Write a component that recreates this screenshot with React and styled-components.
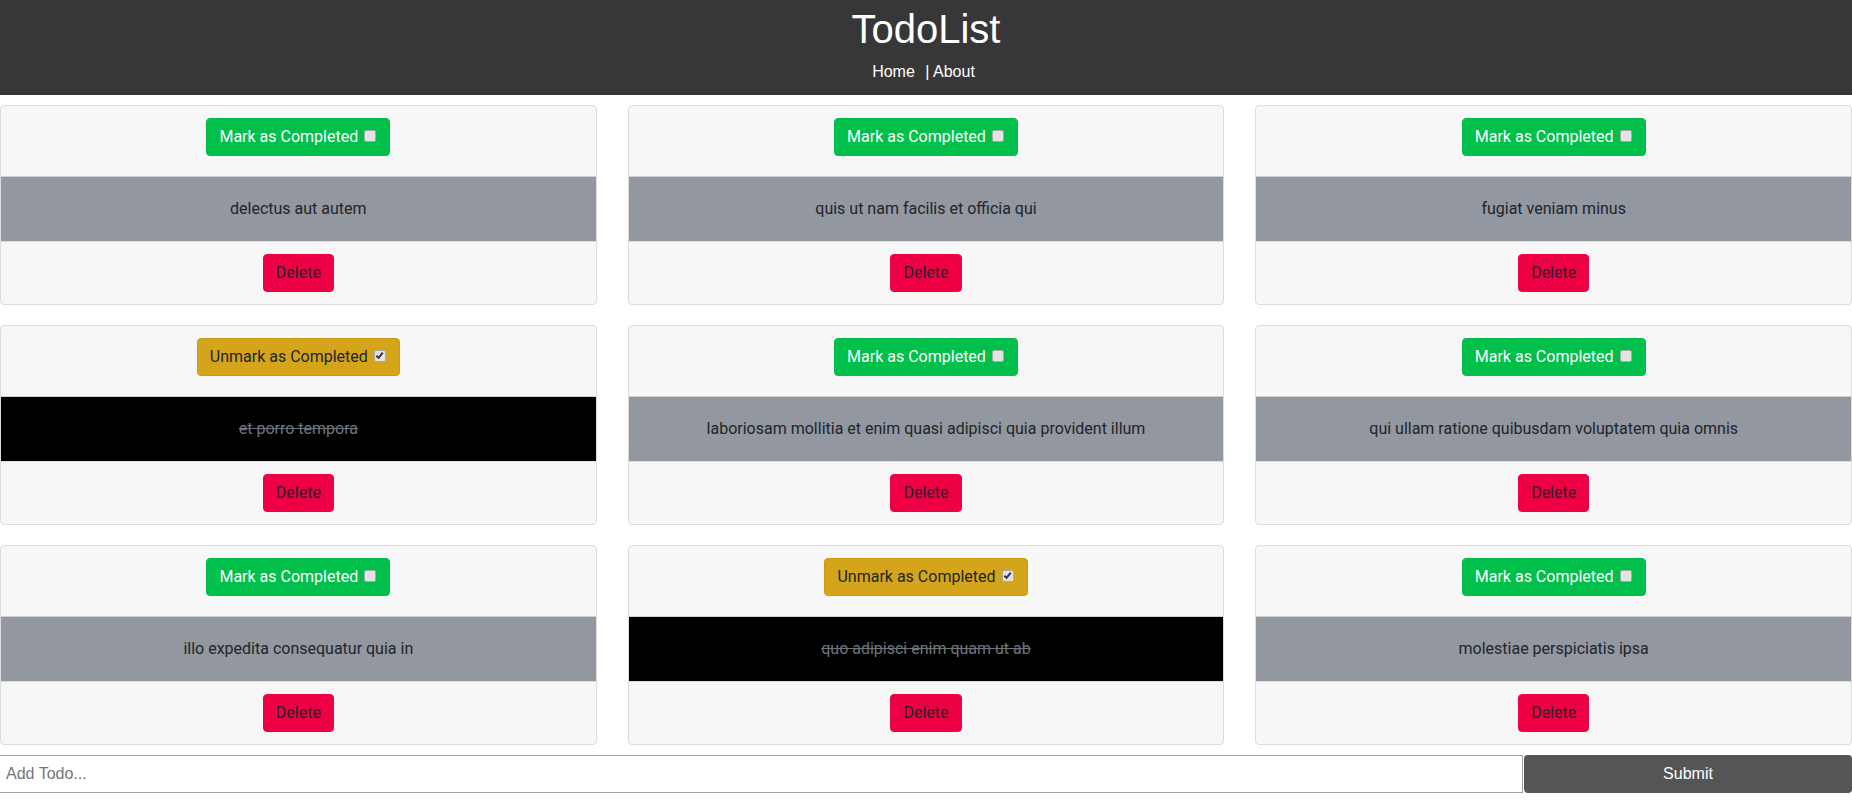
import React from 'react'
import styled, { createGlobalStyle } from 'styled-components'

const GlobalStyle = createGlobalStyle`
  html, body {
    margin: 0;
    padding: 0;
    background: #fff;
  }
  body {
    font-family: Roboto, "Liberation Sans", Arial, sans-serif;
    font-size: 16px;
    line-height: 1.5;
    color: #212529;
  }
  * { box-sizing: border-box; }
`

const todos = [
  { title: 'delectus aut autem', completed: false },
  { title: 'quis ut nam facilis et officia qui', completed: false },
  { title: 'fugiat veniam minus', completed: false },
  { title: 'et porro tempora', completed: true },
  { title: 'laboriosam mollitia et enim quasi adipisci quia provident illum', completed: false },
  { title: 'qui ullam ratione quibusdam voluptatem quia omnis', completed: false },
  { title: 'illo expedita consequatur quia in', completed: false },
  { title: 'quo adipisci enim quam ut ab', completed: true },
  { title: 'molestiae perspiciatis ipsa', completed: false }
]

const Header = styled.header`
  background: #373737;
  color: #fff;
  text-align: center;
  padding: 5px 0 11px;
  font-family: "Liberation Sans", Arial, sans-serif;
`

const Title = styled.h1`
  margin: 0;
  font-size: 40px;
  font-weight: 400;
  line-height: 48px;
`

const Nav = styled.nav`
  margin-top: 7px;
  padding-right: 5px;
  font-size: 16px;
  line-height: 24px;
`

const NavLink = styled.a`
  color: #fff;
  text-decoration: none;
  margin-right: ${props => (props.$spaced ? '6px' : '0')};
`

const Grid = styled.main`
  display: grid;
  grid-template-columns: repeat(3, 1fr);
  column-gap: 31px;
  row-gap: 20px;
  padding-top: 10px;
`

const Card = styled.div`
  background: #f7f7f7;
  border: 1px solid #dcdcdc;
  border-radius: 4px;
  overflow: hidden;
  text-align: center;
`

const Top = styled.div`
  padding: 12px 20px 20px;
`

const Body = styled.div`
  border-top: 1px solid #cfd0d3;
  padding: 20px;
  background: ${props => (props.$done ? '#000' : '#9297a0')};
  color: ${props => (props.$done ? '#6c757d' : '#212529')};
  text-decoration: ${props => (props.$done ? 'line-through' : 'none')};
`

const Bottom = styled.div`
  border-top: 1px solid #dcdcdc;
  padding: 12px 20px;
`

const Button = styled.button`
  display: inline-flex;
  align-items: center;
  height: 38px;
  padding: 0 12px;
  border: 1px solid transparent;
  border-radius: 4px;
  font-family: Roboto, "Liberation Sans", Arial, sans-serif;
  font-size: 16px;
  line-height: 24px;
  cursor: pointer;
`

const ToggleButton = styled(Button)`
  background: ${props => (props.$done ? '#d4a51a' : '#00c04b')};
  border-color: ${props => (props.$done ? '#c99a12' : '#00c04b')};
  color: ${props => (props.$done ? '#212529' : '#fff')};
`

const DeleteButton = styled(Button)`
  background: #ee0044;
  border-color: #ee0044;
  color: #212529;
`

const Box = styled.span`
  display: inline-flex;
  align-items: center;
  justify-content: center;
  width: 12px;
  height: 12px;
  margin: 0 1px 3px 6px;
  background: #e3e3e3;
  border: 1px solid #a9a9a9;
  border-radius: 2px;
`

const AddForm = styled.form`
  display: flex;
  margin-top: 10px;
  font-family: "Liberation Sans", Arial, sans-serif;
`

const Input = styled.input`
  flex: 1;
  height: 38px;
  border: 1px solid #a0a0a0;
  border-left: none;
  padding: 0 6px;
  font-family: "Liberation Sans", Arial, sans-serif;
  font-size: 16px;
  color: #212529;
  outline: none;

  &::placeholder {
    color: #757575;
  }
`

const Submit = styled.button`
  width: 328px;
  height: 38px;
  border: none;
  border-radius: 4px;
  background: #555;
  color: #fff;
  font-family: "Liberation Sans", Arial, sans-serif;
  font-size: 16px;
  margin-left: 1px;
`

const Check = ({ checked }) => (
  <Box>
    {checked && (
      <svg width="9" height="9" viewBox="0 0 10 10">
        <path d="M1.5 5.2 L4 7.6 L8.6 1.8" fill="none" stroke="#333" strokeWidth="2.2" />
      </svg>
    )}
  </Box>
)

const TodoCard = ({ title, completed }) => (
  <Card>
    <Top>
      <ToggleButton $done={completed}>
        {completed ? 'Unmark as Completed' : 'Mark as Completed'}
        <Check checked={completed} />
      </ToggleButton>
    </Top>
    <Body $done={completed}>{title}</Body>
    <Bottom>
      <DeleteButton>Delete</DeleteButton>
    </Bottom>
  </Card>
)

const App = () => (
  <>
    <GlobalStyle />
    <Header>
      <Title>TodoList</Title>
      <Nav>
        <NavLink $spaced href="#">Home</NavLink>
        {' | '}
        <NavLink href="#">About</NavLink>
      </Nav>
    </Header>
    <Grid>
      {todos.map(todo => (
        <TodoCard key={todo.title} title={todo.title} completed={todo.completed} />
      ))}
    </Grid>
    <AddForm onSubmit={e => e.preventDefault()}>
      <Input type="text" placeholder="Add Todo..." />
      <Submit type="submit">Submit</Submit>
    </AddForm>
  </>
)

export default App
